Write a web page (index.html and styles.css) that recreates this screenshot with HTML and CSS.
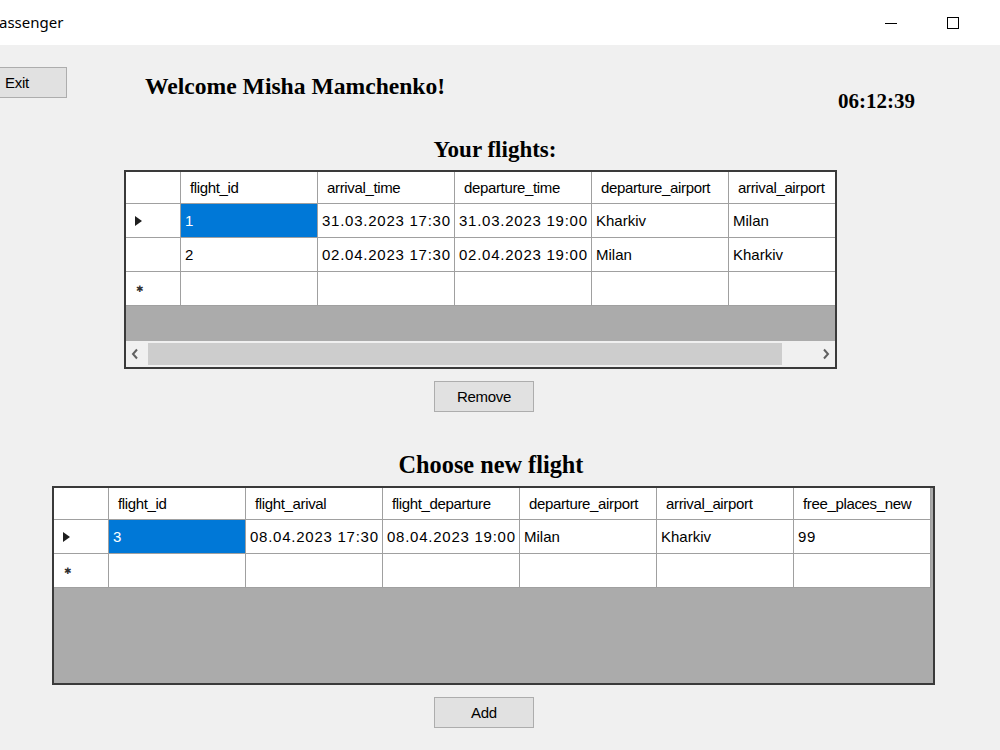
FILE: index.html
```html
<!DOCTYPE html>
<html lang="en">
<head>
    <meta charset="UTF-8">
    <title>Passenger</title>
    <link rel="stylesheet" href="styles.css">
</head>
<body>
    <div class="titlebar">
        <span class="title">assenger</span>
        <div class="controls">
            <span class="ctl-min"></span>
            <span class="ctl-max"></span>
        </div>
    </div>

    <div class="form">
        <div class="topbar">
            <button class="btn btn-exit">Exit</button>
            <h1 class="welcome">Welcome Misha Mamchenko!</h1>
            <div class="clock">06:12:39</div>
        </div>

        <h2 class="caption caption-flights">Your flights:</h2>
        <div class="grid grid-flights">
            <div class="grid-view">
                <div class="grid-table cols-5">
                    <div class="cell rowhead head"></div>
                    <div class="cell head">flight_id</div>
                    <div class="cell head">arrival_time</div>
                    <div class="cell head">departure_time</div>
                    <div class="cell head">departure_airport</div>
                    <div class="cell head">arrival_airport</div>

                    <div class="cell rowhead"><span class="arrow"></span></div>
                    <div class="cell selected">1</div>
                    <div class="cell num">31.03.2023 17:30</div>
                    <div class="cell num">31.03.2023 19:00</div>
                    <div class="cell">Kharkiv</div>
                    <div class="cell">Milan</div>

                    <div class="cell rowhead"></div>
                    <div class="cell">2</div>
                    <div class="cell num">02.04.2023 17:30</div>
                    <div class="cell num">02.04.2023 19:00</div>
                    <div class="cell">Milan</div>
                    <div class="cell">Kharkiv</div>

                    <div class="cell rowhead"><span class="newrow">✱</span></div>
                    <div class="cell"></div>
                    <div class="cell"></div>
                    <div class="cell"></div>
                    <div class="cell"></div>
                    <div class="cell"></div>
                </div>
            </div>
            <div class="hscroll">
                <svg class="sb-arrow" width="10" height="12" viewBox="0 0 10 12"><path d="M7 1.5 L3 6 L7 10.5" fill="none" stroke="#606060" stroke-width="2"/></svg>
                <div class="sb-track"><div class="sb-thumb"></div></div>
                <svg class="sb-arrow" width="10" height="12" viewBox="0 0 10 12"><path d="M3 1.5 L7 6 L3 10.5" fill="none" stroke="#606060" stroke-width="2"/></svg>
            </div>
        </div>
        <button class="btn btn-action">Remove</button>

        <h2 class="caption caption-new">Choose new flight</h2>
        <div class="grid grid-new">
            <div class="grid-view">
                <div class="grid-table cols-6">
                    <div class="cell rowhead head"></div>
                    <div class="cell head">flight_id</div>
                    <div class="cell head">flight_arival</div>
                    <div class="cell head">flight_departure</div>
                    <div class="cell head">departure_airport</div>
                    <div class="cell head">arrival_airport</div>
                    <div class="cell head">free_places_new</div>

                    <div class="cell rowhead"><span class="arrow"></span></div>
                    <div class="cell selected">3</div>
                    <div class="cell num">08.04.2023 17:30</div>
                    <div class="cell num">08.04.2023 19:00</div>
                    <div class="cell">Milan</div>
                    <div class="cell">Kharkiv</div>
                    <div class="cell num">99</div>

                    <div class="cell rowhead"><span class="newrow">✱</span></div>
                    <div class="cell"></div>
                    <div class="cell"></div>
                    <div class="cell"></div>
                    <div class="cell"></div>
                    <div class="cell"></div>
                    <div class="cell"></div>
                </div>
            </div>
        </div>
        <button class="btn btn-action">Add</button>
    </div>
</body>
</html>
```

FILE: styles.css
```css
* {
    box-sizing: border-box;
}

body {
    margin: 0;
    width: 1000px;
    height: 750px;
    overflow: hidden;
    background-color: #f0f0f0;
    font-family: "Liberation Sans", Arial, sans-serif;
    color: #000;
}

/* window caption */
.titlebar {
    height: 45px;
    background-color: #fff;
    display: flex;
    align-items: center;
}

.title {
    font-family: "Noto Sans", "Open Sans", sans-serif;
    font-size: 15px;
    margin-left: -1px;
    margin-top: -1px;
}

.controls {
    margin-left: auto;
    display: flex;
    align-items: center;
    margin-right: 41px;
}

.ctl-min {
    width: 12px;
    height: 1px;
    background-color: #000;
    margin-top: 1px;
}

.ctl-max {
    width: 12px;
    height: 12px;
    border: 1px solid #000;
    margin-left: 50px;
}

/* form */
.topbar {
    height: 80px;
    display: flex;
    align-items: flex-start;
}

.btn {
    width: 100px;
    height: 31px;
    background-color: #e1e1e1;
    border: 1px solid #adadad;
    font-family: "Liberation Sans", Arial, sans-serif;
    font-size: 15px;
    letter-spacing: -0.3px;
    color: #000;
    padding: 0;
}

.btn-exit {
    margin-top: 22px;
    margin-left: -33px;
}

.welcome {
    margin: 27px 0 0 78px;
    font-family: "Liberation Serif", "Times New Roman", serif;
    font-weight: bold;
    font-size: 23.6px;
    line-height: 28px;
}

.clock {
    margin: 44px 85px 0 auto;
    font-family: "Liberation Serif", "Times New Roman", serif;
    font-weight: bold;
    font-size: 21px;
    line-height: 24px;
}

.caption {
    margin: 0;
    font-family: "Liberation Serif", "Times New Roman", serif;
    font-weight: bold;
    font-size: 23px;
    line-height: 26px;
    text-align: center;
}

.caption-flights {
    margin-top: 12px;
    padding-right: 10px;
}

.caption-new {
    margin-top: 40px;
    padding-right: 18px;
    font-size: 24.3px;
}

.btn-action {
    display: block;
    margin: 12px 0 0 434px;
}

/* data grid */
.grid {
    border: 2px solid #3a3a3a;
    background-color: #ababab;
    height: 199px;
    margin-top: 7px;
}

.grid-flights {
    width: 713px;
    margin-left: 124px;
}

.grid-new {
    width: 883px;
    margin-left: 52px;
    margin-top: 8px;
}

.grid-view {
    overflow: hidden;
    height: 169px;
}

.grid-new .grid-view {
    height: 195px;
}

.grid-table {
    display: grid;
    grid-template-rows: 32px;
    grid-auto-rows: 34px;
    width: max-content;
}

.cols-5 {
    grid-template-columns: 55px repeat(5, 137px);
}

.cols-6 {
    grid-template-columns: 55px repeat(6, 137px);
}

.cell {
    background-color: #fff;
    border-right: 1px solid #a0a0a0;
    border-bottom: 1px solid #a0a0a0;
    font-size: 15px;
    padding-left: 4px;
    display: flex;
    align-items: center;
    white-space: nowrap;
    overflow: hidden;
}

.head {
    padding-left: 9px;
    letter-spacing: -0.35px;
}

.num {
    letter-spacing: 0.75px;
}

.selected {
    background-color: #0078d7;
    color: #fff;
}

.rowhead {
    padding-left: 9px;
}

.arrow {
    width: 0;
    height: 0;
    border-left: 7px solid #1e1e1e;
    border-top: 5px solid transparent;
    border-bottom: 5px solid transparent;
}

.newrow {
    font-size: 9px;
    color: #303030;
    margin-left: 1px;
}

/* horizontal scrollbar */
.hscroll {
    height: 26px;
    background-color: #f0f0f0;
    display: flex;
    align-items: center;
    padding: 0 4px;
}

.sb-track {
    flex: 1;
    height: 22px;
    padding: 0 39px 0 8px;
}

.sb-thumb {
    height: 100%;
    background-color: #cdcdcd;
}
```
